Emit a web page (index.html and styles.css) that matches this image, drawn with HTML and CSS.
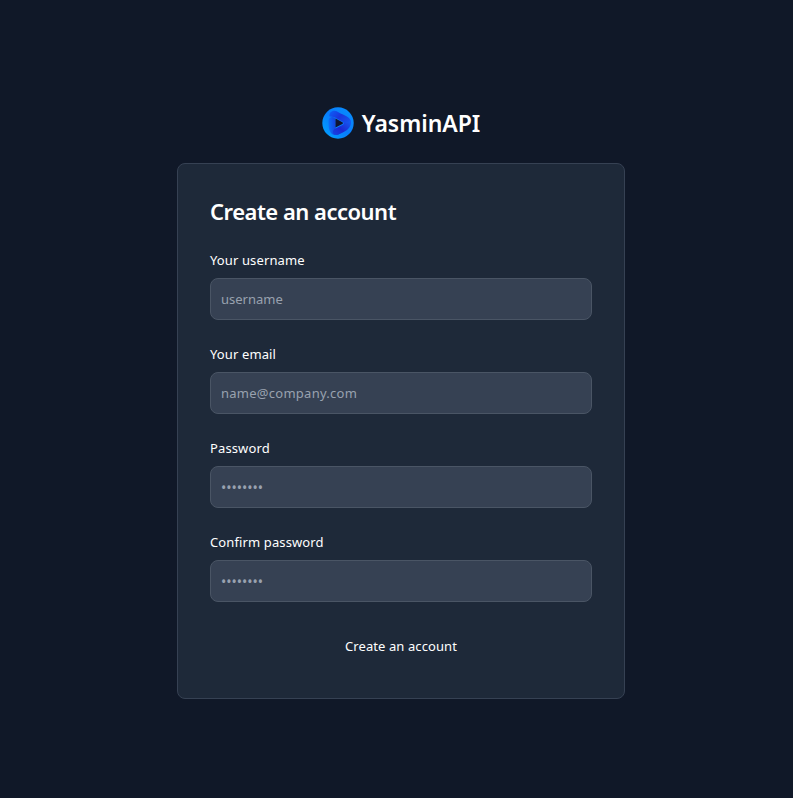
FILE: index.html
```html
<!DOCTYPE html>
<html lang="en">
<head>
<meta charset="utf-8">
<title>YasminAPI</title>
<link rel="stylesheet" href="styles.css">
</head>
<body>
<main class="page">
  <a class="brand">
    <svg class="logo" viewBox="0 0 32 32" aria-hidden="true">
      <defs>
        <linearGradient id="rim" x1="0" y1="1" x2="1" y2="0"><stop offset="0" stop-color="#00a6ff"/><stop offset=".5" stop-color="#087cfb"/><stop offset="1" stop-color="#0790ff"/></linearGradient>
        <linearGradient id="top" x1="0" y1="0" x2="1" y2=".7"><stop offset="0" stop-color="#0a62f8"/><stop offset=".5" stop-color="#1b35dc"/><stop offset="1" stop-color="#1456f0"/></linearGradient>
        <linearGradient id="left" x1="0" y1=".5" x2="1" y2=".4"><stop offset="0" stop-color="#0b70fb"/><stop offset="1" stop-color="#1b20c4"/></linearGradient>
        <linearGradient id="right" x1="1" y1="0" x2="0" y2="1"><stop offset="0" stop-color="#1262f8"/><stop offset=".6" stop-color="#1b28d2"/><stop offset="1" stop-color="#1444e6"/></linearGradient>
      </defs>
      <circle cx="16" cy="16" r="15.7" fill="url(#rim)"/>
      <path d="M7.500 9.500C6.500 4.500 12 2 16 5c3 2.500 8 3 11 6 2.500 2.500 2.500 6 0 8l-6-4-8-4.500c-2-1-4-1-5.500-1z" fill="url(#top)"/>
      <path d="M6.500 14c0-5 6.500-5.500 7-1v9c0 3 3 3.500 6 2.500-2 4.500-8 4.500-10.500 1.500-2.500-3-2.500-7-2.500-12z" fill="url(#left)"/>
      <path d="M28.500 13c1.500 6-2 9.500-6 11.500-4 2.500-8 4-11 2.500-1.500-2.500 0-5 3-6l6-3c1.800-1 1.500-2 .5-3 3 1.500 6 1 7.500-2z" fill="url(#right)"/>
      <path d="M13.500 11.500l6.800 3.700c1 .5 1 1.200 0 1.700l-6.800 3.600z" fill="#101530"/>
    </svg>
    <span class="brand-name">YasminAPI</span>
  </a>
  <section class="card">
    <h1 class="title">Create an account</h1>
    <form class="form">
      <div class="field">
        <label class="label" for="username">Your username</label>
        <input class="input" id="username" type="text" placeholder="username">
      </div>
      <div class="field">
        <label class="label" for="email">Your email</label>
        <input class="input email" id="email" type="email" placeholder="name@company.com">
      </div>
      <div class="field">
        <label class="label" for="password">Password</label>
        <input class="input dots" id="password" type="password" placeholder="••••••••">
      </div>
      <div class="field">
        <label class="label" for="confirm">Confirm password</label>
        <input class="input dots" id="confirm" type="password" placeholder="••••••••">
      </div>
      <button class="submit" type="button">Create an account</button>
    </form>
  </section>
</main>
</body>
</html>
```
FILE: styles.css
```css
* { box-sizing: border-box; }
body {
  margin: 0;
  background: #101828;
  color: #fff;
  font-family: "Noto Sans", sans-serif;
}
.page {
  min-height: 798px;
  padding: 8px 0 0 9px;
  display: flex;
  flex-direction: column;
  align-items: center;
  justify-content: center;
}
.brand {
  display: flex;
  align-items: center;
  gap: 8px;
  margin-bottom: 24px;
}
.logo { width: 32px; height: 32px; }
.brand-name {
  font-size: 23px;
  font-weight: 600;
  line-height: 32px;
  letter-spacing: -0.05px;
}
.card {
  width: 448px;
  padding: 32px;
  background: #1e2939;
  border: 1px solid #364153;
  border-radius: 8px;
}
.title {
  margin: 0 0 24px;
  font-size: 22px;
  font-weight: 600;
  line-height: 30px;
  letter-spacing: -0.5px;
}
.form { display: flex; flex-direction: column; gap: 24px; }
.field { display: flex; flex-direction: column; align-items: flex-start; gap: 8px; }
.label { font-size: 13px; line-height: 20px; letter-spacing: 0.12px; }
.input {
  width: 100%;
  height: 42px;
  padding: 10px;
  color: #fff;
  background: #364153;
  border: 1px solid #4a5565;
  border-radius: 8px;
  font: 13px/20px "Noto Sans", sans-serif;
}
.input::placeholder { color: #99a1af; opacity: 1; }
.email { letter-spacing: 0.26px; }
.dots { font-size: 14px; }
.submit {
  height: 40px;
  padding: 10px 20px;
  border: 0;
  background: transparent;
  color: #fff;
  font: 13px/20px "Noto Sans", sans-serif;
  letter-spacing: 0.08px;
}
```
